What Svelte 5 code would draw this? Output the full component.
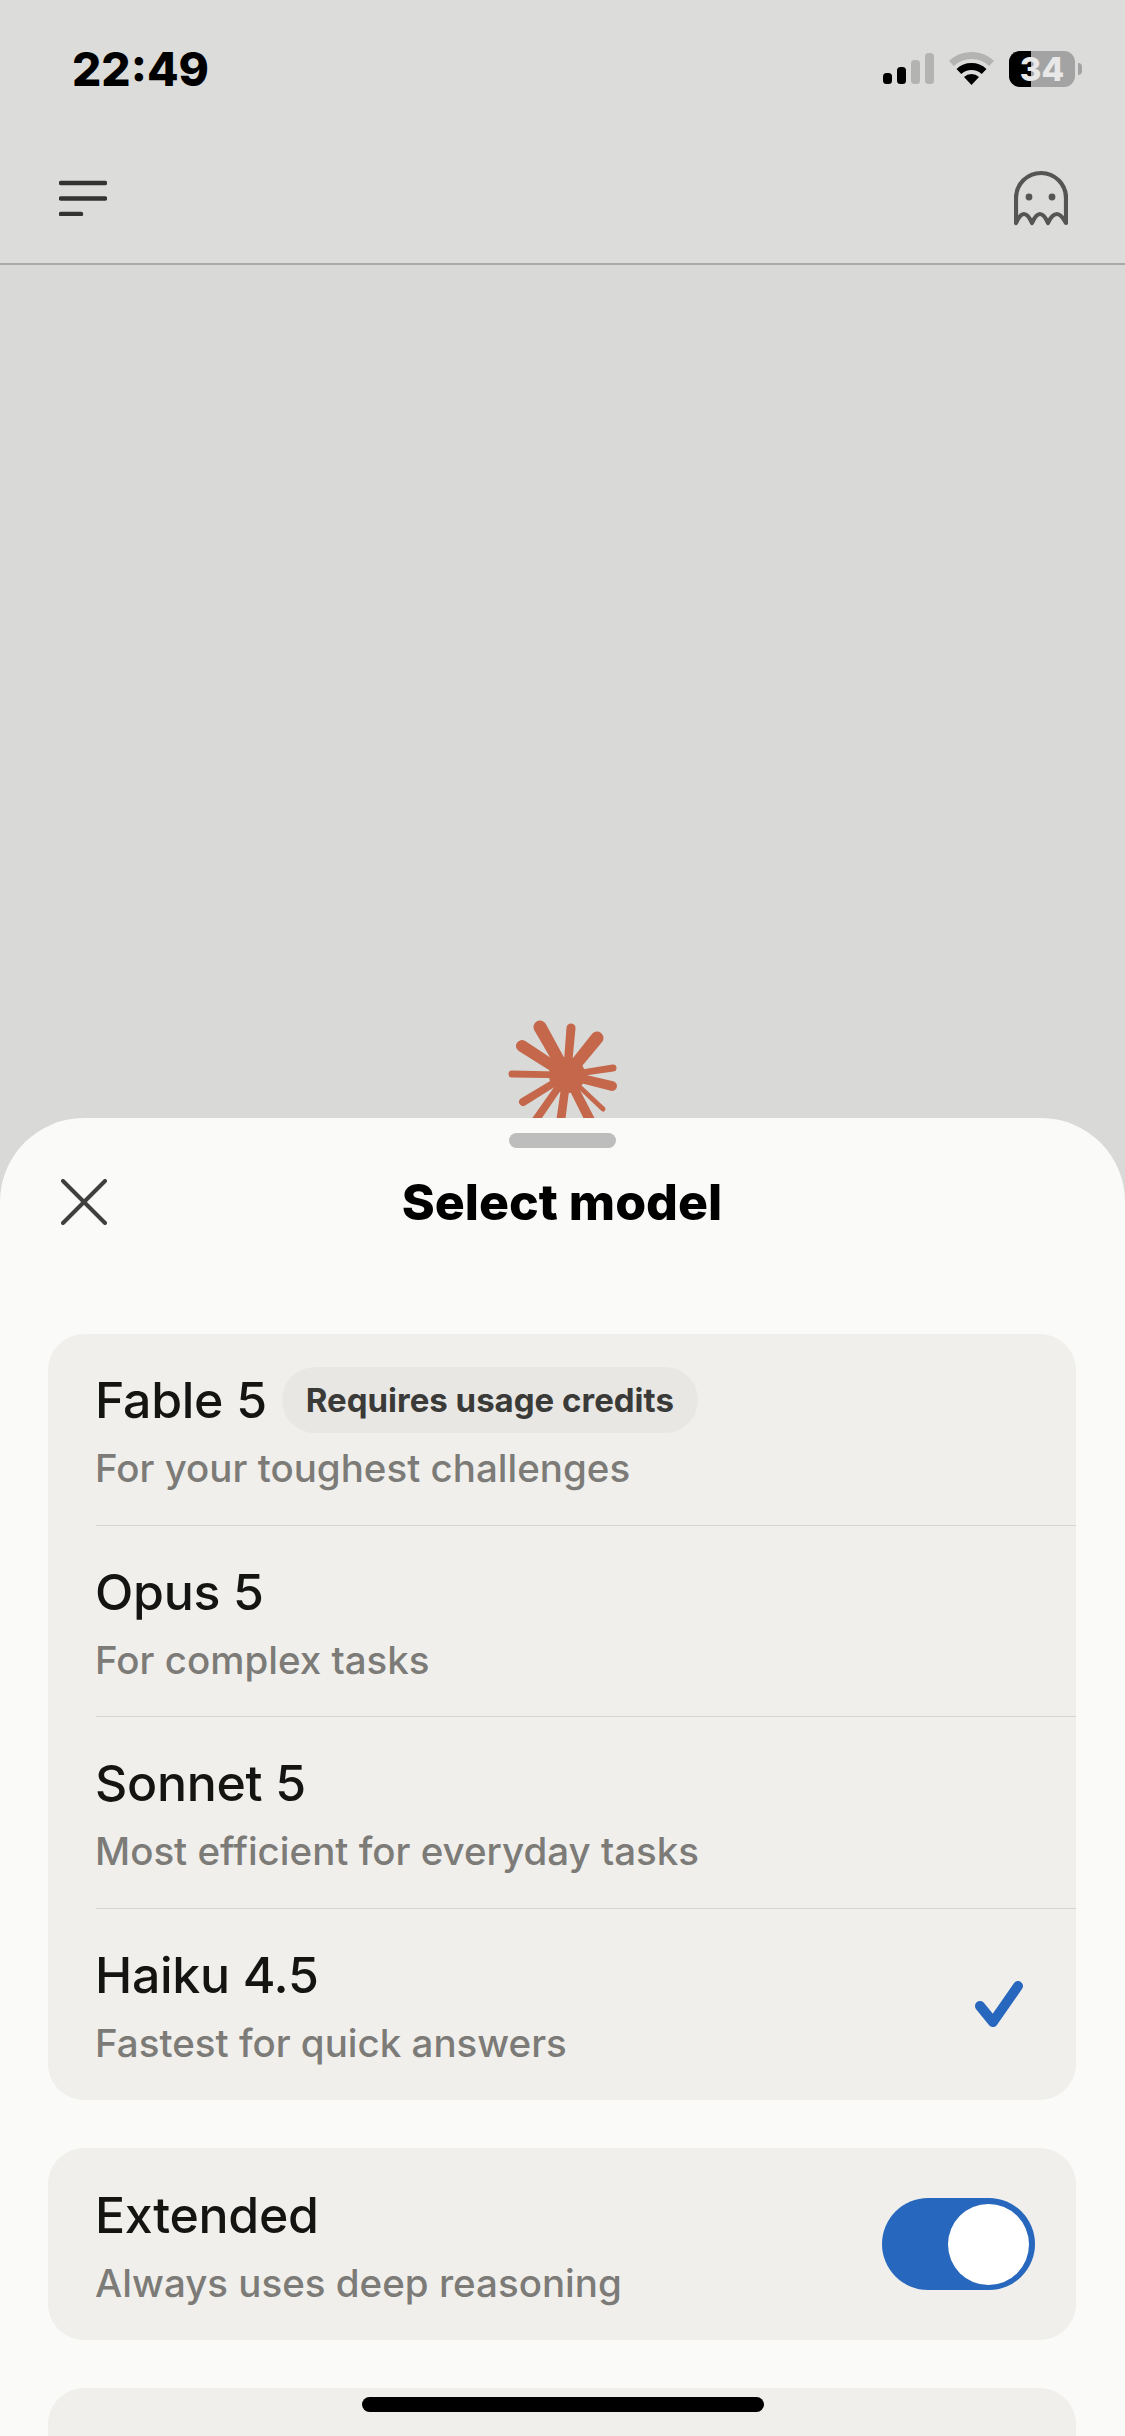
<script lang="ts">
  const models = [
    { name: 'Fable 5', desc: 'For your toughest challenges', badge: 'Requires usage credits' },
    { name: 'Opus 5', desc: 'For complex tasks' },
    { name: 'Sonnet 5', desc: 'Most efficient for everyday tasks' },
    { name: 'Haiku 4.5', desc: 'Fastest for quick answers', selected: true }
  ];

  // spark spokes: end point and end width, in page coordinates
  const cx = 567;
  const cy = 1075;
  const spokes = [
    [540, 1027, 13], [571, 1028, 9], [597, 1038, 13], [613, 1068, 7],
    [612, 1086, 10], [603, 1109, 5], [592, 1124, 10], [560, 1126, 9],
    [533, 1124, 8], [523, 1102, 8], [512, 1074, 7], [522, 1046, 12]
  ];

  function spokePath([x, y, w]: number[]) {
    const len = Math.hypot(x - cx, y - cy);
    const nx = (-(y - cy) / len) * (w / 2);
    const ny = ((x - cx) / len) * (w / 2);
    const bx = nx * 0.9;
    const by = ny * 0.9;
    return `M${cx + bx} ${cy + by}L${x + nx} ${y + ny}A${w / 2} ${w / 2} 0 0 0 ${x - nx} ${y - ny}L${cx - bx} ${cy - by}Z`;
  }
</script>

<div class="screen">
  <div class="status">
    <span class="time">22:49</span>
    <div class="status-icons">
      <svg class="signal" width="51" height="31" viewBox="0 0 51 31">
        <rect x="0" y="20" width="9" height="11" rx="3.5" fill="#000" />
        <rect x="14" y="14" width="9" height="17" rx="3.5" fill="#000" />
        <rect x="28" y="7" width="9" height="24" rx="3.5" fill="#b3b3b1" />
        <rect x="42" y="0" width="9" height="31" rx="3.5" fill="#b3b3b1" />
      </svg>
      <svg class="wifi" width="45" height="33" viewBox="0 0 45 33" fill="none">
        <path d="M2.4 11.4A29.5 29.5 0 0 1 42.6 11.4" stroke="#b3b3b1" stroke-width="7" />
        <path d="M9.9 19.5A18.5 18.5 0 0 1 35.1 19.5" stroke="#000" stroke-width="7" />
        <path d="M22.5 33L15 25A11 11 0 0 1 30 25Z" fill="#000" />
      </svg>
      <div class="battery">
        <div class="battery-body">
          <div class="battery-fill"></div>
          <span class="battery-text">34</span>
        </div>
        <div class="battery-nub"></div>
      </div>
    </div>
  </div>

  <div class="nav">
    <svg width="48" height="36" viewBox="0 0 48 36" fill="none" stroke="#333331" stroke-width="4.5" stroke-linecap="round">
      <path d="M2 3H46M2 18.5H46M2 34H22" />
    </svg>
    <svg width="54" height="56" viewBox="1015 169 54 56" fill="none" stroke="#555553" stroke-width="4.2" stroke-linecap="round" stroke-linejoin="round">
      <path d="M1017 222V197A25 25 0 0 1 1067 197V222Q1062 213 1058 213Q1053 213 1049 222Q1045 213 1041 213Q1037 213 1033 222Q1029 213 1025 213Q1021 213 1017 222Z" />
      <circle cx="1030" cy="196" r="3.4" fill="#555553" stroke="none" />
      <circle cx="1053" cy="196" r="3.4" fill="#555553" stroke="none" />
    </svg>
  </div>

  <div class="main">
    <svg class="spark" width="115" height="110" viewBox="505 1020 115 110" fill="#c4674a">
      <circle cx={cx} cy={cy} r="18" />
      {#each spokes as s}
        <path d={spokePath(s)} />
      {/each}
    </svg>
  </div>

  <div class="sheet">
    <div class="grabber"></div>
    <div class="sheet-head">
      <svg class="close" width="46" height="46" viewBox="0 0 46 46" fill="none" stroke="#3f3f3d" stroke-width="4" stroke-linecap="round">
        <path d="M2 2L44 44M44 2L2 44" />
      </svg>
      <h1>Select model</h1>
    </div>

    <div class="card">
      {#each models as m}
        <div class="row">
          <div class="row-text">
            <div class="title-line">
              <span class="name">{m.name}</span>
              {#if m.badge}<span class="badge">{m.badge}</span>{/if}
            </div>
            <div class="desc">{m.desc}</div>
          </div>
          {#if m.selected}
            <svg class="check" width="48" height="46" viewBox="975 1982 48 46" fill="none" stroke="#2767bd" stroke-width="10" stroke-linecap="round" stroke-linejoin="round">
              <path d="M980 2007L993 2023L1018 1987" />
            </svg>
          {/if}
        </div>
      {/each}
    </div>

    <div class="card">
      <div class="row">
        <div class="row-text">
          <div class="title-line"><span class="name">Extended</span></div>
          <div class="desc">Always uses deep reasoning</div>
        </div>
        <div class="toggle"><div class="knob"></div></div>
      </div>
    </div>

    <div class="card">
      <div class="row more">
        <div class="row-text">
          <div class="title-line"><span class="name">More models</span></div>
        </div>
        <svg class="caret" width="34" height="20" viewBox="0 0 34 20" fill="none" stroke="#7c7b77" stroke-width="4" stroke-linecap="round" stroke-linejoin="round">
          <path d="M3 17L17 3L31 17" />
        </svg>
      </div>
    </div>
  </div>

  <div class="home-bar"></div>
</div>

<style>
  :global(body) {
    margin: 0;
    background: #fafaf8;
  }

  .screen {
    position: relative;
    width: 1125px;
    height: 2436px;
    overflow: hidden;
    display: flex;
    flex-direction: column;
    background: #d9d9d7;
    font-family: Inter, 'Liberation Sans', sans-serif;
  }

  .status {
    height: 138px;
    flex: none;
    box-sizing: border-box;
    padding: 42px 43px 0 72px;
    display: flex;
    justify-content: space-between;
    align-items: flex-start;
    background: #dcdcda;
  }

  .time {
    font-size: 46px;
    font-weight: 800;
    line-height: 54px;
    color: #000;
  }

  .status-icons {
    display: flex;
    align-items: flex-end;
    gap: 15px;
    margin-top: 9px;
  }

  .signal {
    margin-bottom: 3px;
  }

  .wifi {
    margin-bottom: 2px;
  }

  .battery {
    display: flex;
    align-items: center;
    gap: 3px;
  }

  .battery-body {
    position: relative;
    width: 66px;
    height: 36px;
    border-radius: 11px;
    background: #a3a3a3;
    display: flex;
    align-items: center;
    justify-content: center;
  }

  .battery-fill {
    position: absolute;
    left: 0;
    top: 0;
    bottom: 0;
    width: 22px;
    border-radius: 11px 0 0 11px;
    background: #000;
  }

  .battery-text {
    position: relative;
    font-size: 33px;
    font-weight: 800;
    color: #e8e8e8;
    line-height: 36px;
  }

  .battery-nub {
    width: 4px;
    height: 12px;
    border-radius: 0 4px 4px 0;
    background: #a3a3a3;
  }

  .nav {
    height: 127px;
    flex: none;
    box-sizing: border-box;
    padding: 0 57px 6px 59px;
    display: flex;
    justify-content: space-between;
    align-items: center;
    background: #dcdcda;
    border-bottom: 2px solid #a9a9a9;
  }

  .main {
    flex: 1;
    display: flex;
    justify-content: center;
    align-items: flex-end;
  }

  .spark {
    margin-bottom: -12px;
  }

  .sheet {
    position: relative;
    height: 1318px;
    flex: none;
    box-sizing: border-box;
    padding: 15px 49px 0 48px;
    background: #fafaf8;
    border-radius: 84px 84px 0 0;
  }

  .grabber {
    width: 107px;
    height: 15px;
    margin: 0 auto;
    border-radius: 8px;
    background: #bdbdbd;
  }

  .sheet-head {
    height: 108px;
    margin-bottom: 78px;
    display: grid;
    grid-template-columns: 1fr auto 1fr;
    align-items: center;
  }

  .close {
    margin-left: 13px;
  }

  h1 {
    margin: 0;
    font-size: 50px;
    font-weight: 800;
    color: #000;
  }

  .card {
    border-radius: 36px;
    background: #f0efec;
    margin-bottom: 48px;
    overflow: hidden;
  }

  .row {
    height: 191.5px;
    box-sizing: border-box;
    margin-left: 48px;
    padding-right: 53px;
    display: flex;
    align-items: center;
    justify-content: space-between;
    border-bottom: 1px solid #d6d5d2;
  }

  .row:last-child {
    border-bottom: none;
  }

  /* third card is cut off by the screen edge, keep the title where the others have it */
  .row.more {
    align-items: flex-start;
    padding-top: 33px;
  }

  .row-text {
    display: flex;
    flex-direction: column;
    gap: 12px;
    margin-left: -1px;
  }

  .title-line {
    display: flex;
    align-items: center;
    gap: 15px;
    height: 66px;
  }

  .name {
    font-size: 50px;
    font-weight: 500;
    color: #141413;
    letter-spacing: -0.3px;
  }

  .badge {
    height: 66px;
    box-sizing: border-box;
    padding: 0 24px;
    display: flex;
    align-items: center;
    border-radius: 33px;
    background: #e8e7e4;
    font-size: 33px;
    font-weight: 700;
    color: #3a3a38;
  }

  .desc {
    font-size: 38.5px;
    font-weight: 500;
    color: #7c7b77;
    line-height: 46px;
  }

  .caret {
    margin-top: 14px;
  }

  .toggle {
    width: 153px;
    height: 92px;
    margin-right: -12px;
    box-sizing: border-box;
    padding: 6px;
    display: flex;
    justify-content: flex-end;
    border-radius: 46px;
    background: #2767bd;
  }

  .knob {
    width: 81px;
    height: 81px;
    border-radius: 50%;
    background: #fff;
  }

  .home-bar {
    position: absolute;
    left: 362px;
    top: 2397px;
    width: 402px;
    height: 15px;
    border-radius: 8px;
    background: #000;
  }
</style>
